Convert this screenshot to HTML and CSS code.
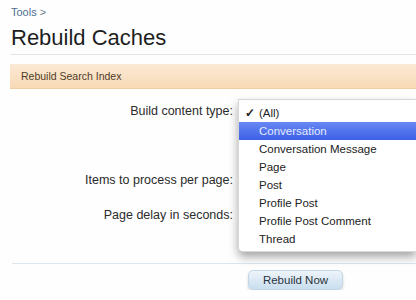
FILE: index.html
```html
<!DOCTYPE html>
<html lang="en">
<head>
    <meta charset="UTF-8">
    <title>Rebuild Caches</title>
    <link rel="stylesheet" href="styles.css">
</head>
<body>
    <div class="breadcrumb"><a href="#">Tools</a> &gt;</div>
    <h1 class="title">Rebuild Caches</h1>

    <div class="section-head">Rebuild Search Index</div>

    <form class="form">
        <div class="row row-type">
            <label class="label">Build content type:</label>
            <div class="control">
                <ul class="menu">
                    <li class="menu-item checked">(All)</li>
                    <li class="menu-item selected">Conversation</li>
                    <li class="menu-item">Conversation Message</li>
                    <li class="menu-item">Page</li>
                    <li class="menu-item">Post</li>
                    <li class="menu-item">Profile Post</li>
                    <li class="menu-item">Profile Post Comment</li>
                    <li class="menu-item">Thread</li>
                </ul>
            </div>
        </div>
        <div class="row row-items">
            <label class="label">Items to process per page:</label>
            <div class="control"></div>
        </div>
        <div class="row row-delay">
            <label class="label">Page delay in seconds:</label>
            <div class="control"></div>
        </div>

        <div class="submit-row">
            <button type="button" class="btn">Rebuild Now</button>
        </div>
    </form>
</body>
</html>
```

FILE: styles.css
```css
body {
    margin: 0;
    padding: 0 0 0 10px;
    background-color: #fefefe;
    color: #222;
    font-family: 'Liberation Sans', Arial, sans-serif;
    overflow: hidden;
}
.breadcrumb {
    font-size: 11px;
    color: #6a7a8a;
    padding: 6px 0 0 1px;
    height: 12px;
}
.breadcrumb a {
    color: #4d6e8e;
    text-decoration: none;
}
.title {
    margin: 0;
    font-size: 22px;
    font-weight: normal;
    color: #1e1e1e;
    line-height: 30px;
    padding: 5px 0 0 1px;
    height: 31px;
    border-bottom: 1px solid #e6e6e6;
}
.section-head {
    margin-top: 9px;
    height: 24px;
    line-height: 24px;
    padding-left: 11px;
    font-size: 10.5px;
    color: #4f3c28;
    background: linear-gradient(to bottom, #fbe9d4, #f8dab6);
    border-bottom: 1px solid #f1cda2;
}
.form {
    position: relative;
}
.row {
    display: flex;
    align-items: center;
    height: 20px;
}
.row-type {
    margin-top: 12px;
}
.row-items {
    margin-top: 49px;
}
.row-delay {
    margin-top: 15px;
}
.label {
    width: 223px;
    text-align: right;
    font-size: 12.5px;
    color: #2b2b2b;
}
.control {
    position: relative;
    flex: 1;
    margin-left: 5px;
    height: 20px;
}
.menu {
    position: absolute;
    z-index: 2;
    top: -2px;
    left: 0;
    right: 0;
    margin: 0;
    padding: 4px 0 3px;
    list-style: none;
    background: #fff;
    border: 1px solid #d8d8d8;
    border-right: none;
    border-radius: 0 0 0 5px;
    box-shadow: 0 5px 10px rgba(0, 0, 0, 0.35);
    font-size: 11.5px;
}
.menu-item {
    position: relative;
    height: 18px;
    line-height: 18px;
    padding-left: 20px;
    color: #222;
}
.menu-item.checked::before {
    content: "\2713";
    position: absolute;
    left: 6px;
    font-size: 12px;
    font-weight: bold;
}
.menu-item.selected {
    background: linear-gradient(to bottom, #6788f2, #3d60e6);
    color: #e4eaff;
}
.submit-row {
    margin-top: 38px;
    padding: 6px 0 0 236px;
    border-top: 1px solid #dce6ee;
    margin-left: 2px;
}
.btn {
    width: 95px;
    height: 20px;
    border: 1px solid #c3d6e6;
    border-radius: 5px;
    background: linear-gradient(to bottom, #eef4fa, #c9deef);
    box-shadow: 0 2px 3px rgba(0, 0, 0, 0.15);
    font-family: 'Liberation Sans', Arial, sans-serif;
    font-size: 11.5px;
    color: #2a3440;
    padding: 0;
    cursor: pointer;
}
```
